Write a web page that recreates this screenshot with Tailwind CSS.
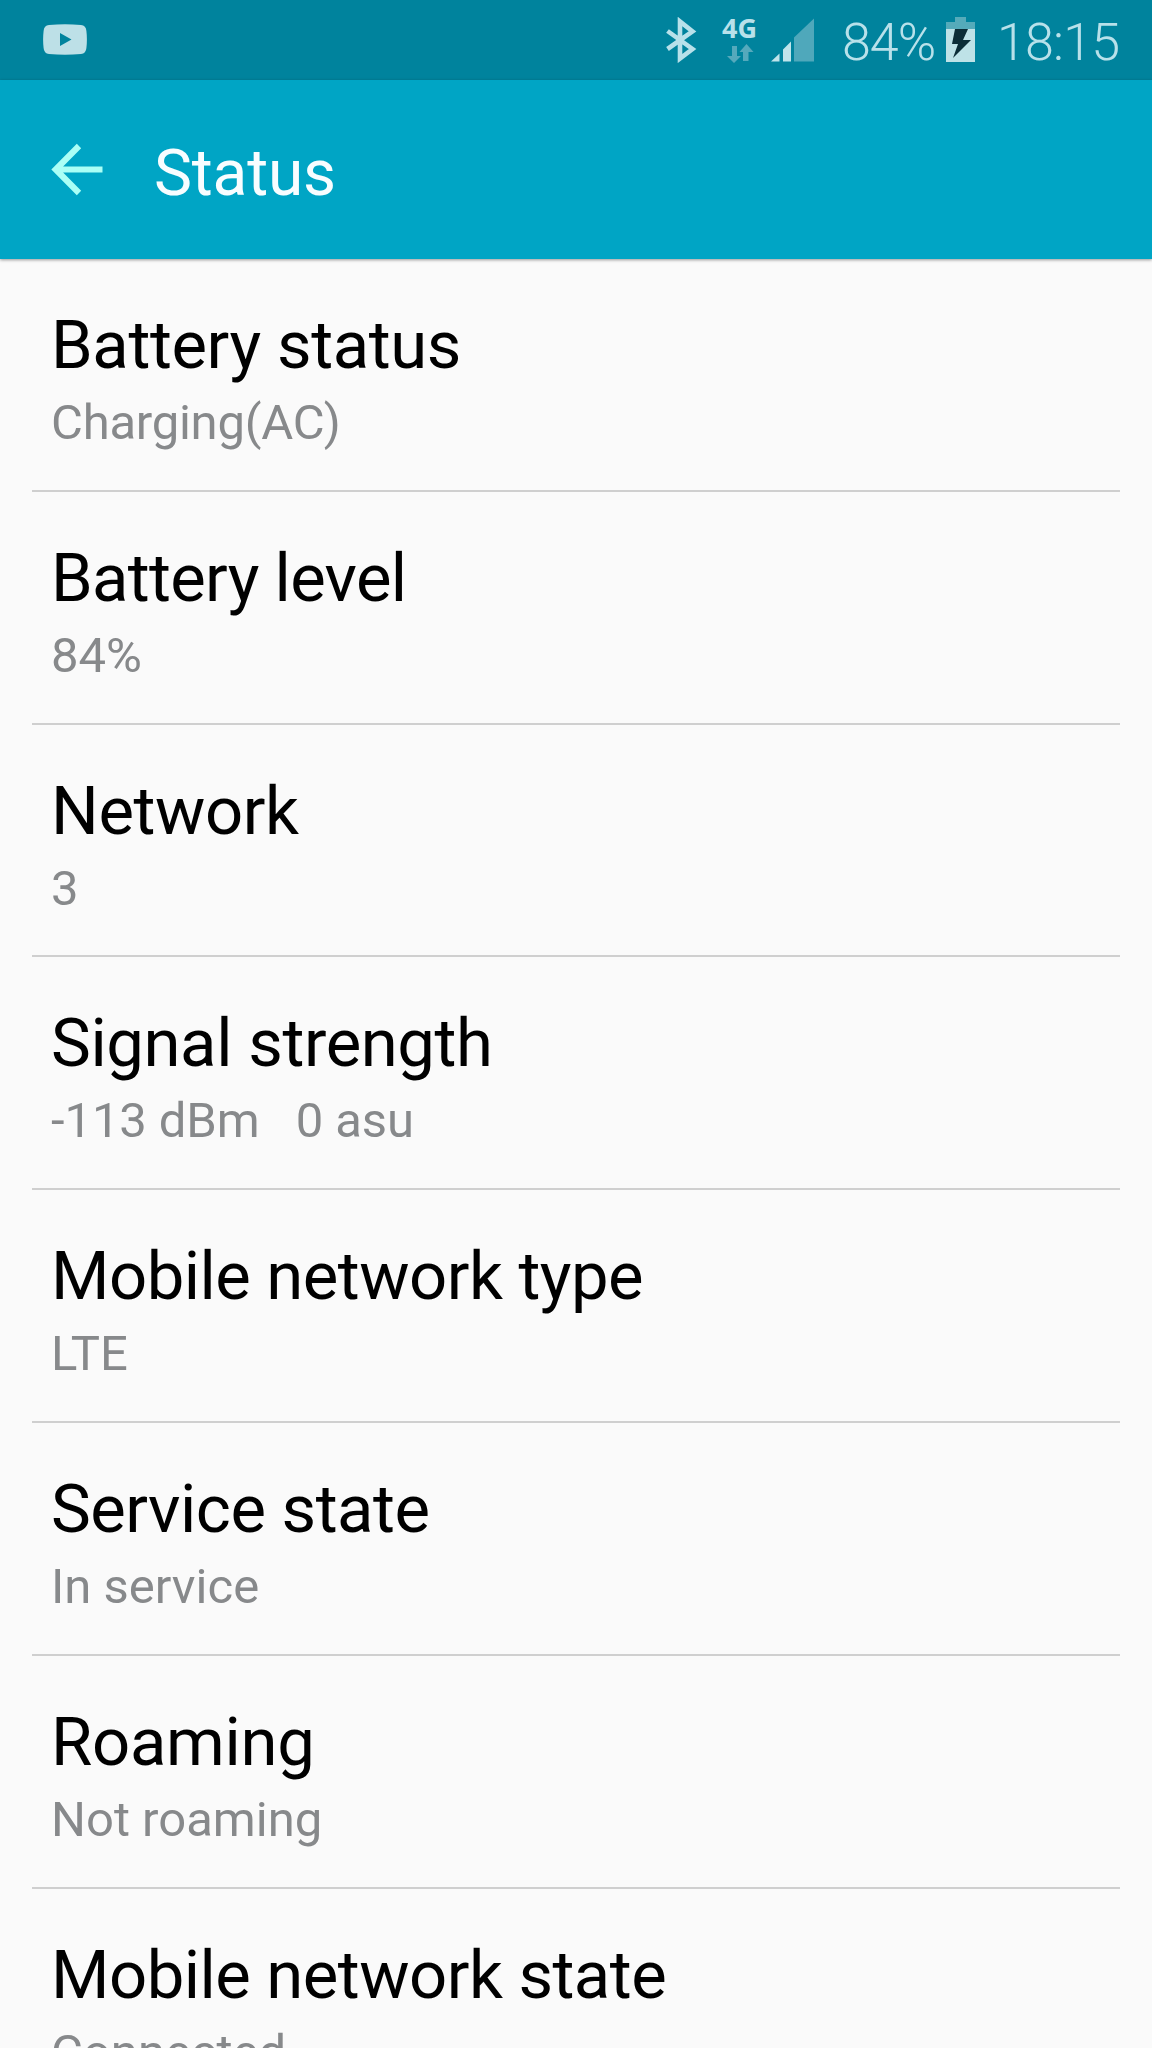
<!DOCTYPE html>
<html lang="en">
<head>
<meta charset="utf-8">
<title>Status</title>
<script src="https://cdn.jsdelivr.net/npm/@tailwindcss/browser@4"></script>
</head>
<body class="h-[2048px] w-[1152px] overflow-hidden bg-[#fafafa] font-['Roboto',sans-serif] text-black">
<header class="flex h-20 items-start bg-[#00839d] text-[#b8e1ea]">
  <svg class="ml-[43px] mt-6 h-[31px] w-11 shrink-0" viewBox="0 0 44 31"><path fill="#bde0e7" fill-rule="evenodd" d="M6 1Q22-.4 38 1Q43 1.5 43.400 7Q44.400 15.500 43.400 24Q43 29.500 38 30Q22 31.400 6 30Q1 29.500 .6 24Q-.4 15.500 .6 7Q1 1.500 6 1ZM17 9V22L28.500 15.500Z"/></svg>
  <svg class="ml-[578px] mt-[17px] h-[46px] w-8 shrink-0" viewBox="0 0 32 46" fill="none" stroke="#b8e1ea" stroke-width="4.600"><path d="M2.500 14L27.500 32L15 41.500V4.500L27.500 14.500L2.500 32"/></svg>
  <div class="ml-[25px] mt-4 flex w-[36px] shrink-0 flex-col">
    <span class="font-['Noto_Sans',sans-serif] text-[27px] leading-[24px] font-bold">4G</span>
    <svg class="ml-[5px] mt-1 h-5 w-[27px]" viewBox="0 0 27 20" fill="#55a9bc"><path d="M5 2H10V12H14L7 19L0 12H5ZM16 17V8H12.500L19.500 0L26.500 8H21.500V17Z"/></svg>
  </div>
  <svg class="ml-[13px] mt-[18px] h-11 w-[45px] shrink-0" viewBox="0 0 45 44"><path fill="#c0e4eb" d="M0 43.500L8.500 35.500V43.500ZM12 43.500V31.500L20 23.500V43.500Z"/><path fill="#4fa8bb" d="M23 43.500V19.500L43 .5V43.500Z"/></svg>
  <span class="ml-[26px] mt-[11px] w-[104px] shrink-0 text-[52px] leading-[64px] font-[350] tracking-[-1px]">84%</span>
  <svg class="mt-[17px] h-[45px] w-[29px] shrink-0" viewBox="0 0 29 45"><path fill="#55abba" d="M9 0H20V5H29V12H0V5H9Z"/><path fill="#bee2e7" d="M0 12H29V45H0Z"/><path fill="#0b2d37" d="M9 12H22L17 23H25L7 41L12 27H6Z"/></svg>
  <span class="ml-[22px] mt-[11px] shrink-0 text-[52px] leading-[64px] font-[350] tracking-[-0.8px]">18:15</span>
</header>
<nav class="relative flex h-[179px] items-start bg-[#00a5c5] shadow-[0_1px_3px_rgba(0,0,0,0.4)]">
  <svg class="ml-[51px] mt-[63px] h-[53px] w-[52px] shrink-0" viewBox="0 0 52 53" fill="none" stroke="#aafff6" stroke-width="6.200"><path d="M28 3L4.700 26.500L28 50M4.500 26.500H51.500"/></svg>
  <h1 class="ml-[51px] mt-[54px] text-[64px] leading-[80px] tracking-[-0.2px] text-[#f8fdff]">Status</h1>
</nav>
<main id="list" class="flex flex-col px-8"></main>
<script>
const rows = [
  ["Battery status", "Charging(AC)", "tracking-[-0.4px]", "tracking-[-0.25px]"],
  ["Battery level", "84%", "tracking-[-0.7px]", ""],
  ["Network", "3", "tracking-[-0.4px]", ""],
  ["Signal strength", "-113 dBm   0 asu", "tracking-[-0.4px]", "tracking-[-0.1px]"],
  ["Mobile network type", "LTE", "tracking-[-0.53px]", ""],
  ["Service state", "In service", "tracking-[-0.5px]", ""],
  ["Roaming", "Not roaming", "tracking-[-0.3px]", ""],
  ["Mobile network state", "Connected", "tracking-[-0.53px]", ""],
];
document.getElementById("list").innerHTML = rows.map(([title, value, titleTracking, valueTracking]) => `
  <section class="flex h-[232.8px] shrink-0 flex-col border-b-2 border-[#cfcfcf] pr-5 pl-[19px] pt-[46px]">
    <h2 class="text-[67px] leading-[80px] whitespace-pre ${titleTracking}">${title}</h2>
    <p class="mt-[10px] text-[49px] leading-[56px] whitespace-pre text-[#87898b] ${valueTracking}">${value}</p>
  </section>`).join("");
</script>
</body>
</html>
